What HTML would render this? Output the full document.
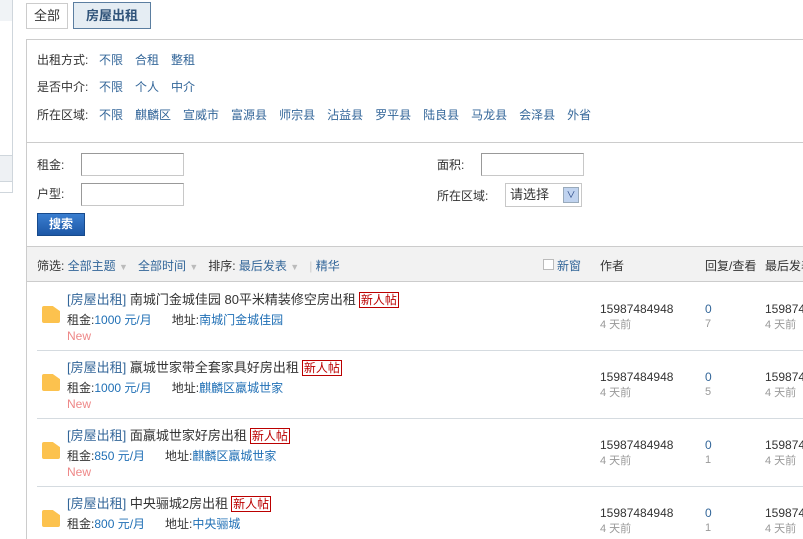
<!DOCTYPE html>
<html><head><meta charset="utf-8"><style>
*{margin:0;padding:0;box-sizing:border-box}
body{width:803px;height:530px;overflow:hidden;background:#fff;font-family:"Liberation Sans","Noto Sans CJK SC",sans-serif;font-size:12px;color:#333;position:relative}
.a{position:absolute;white-space:nowrap}
a,.l{color:#336699;text-decoration:none}
.b{color:#1f6fb5}
.inp{position:absolute;width:103px;height:23px;border:1px solid #c8c8c8;border-top-color:#999;border-left-color:#999;background:#fff}
.line{position:absolute;height:1px;background:#d5dbe0}
.fold{position:absolute;width:18px;height:17px;background:#fcc24e;border-radius:2px;clip-path:polygon(0 0,60% 0,100% 30%,100% 100%,0 100%)}
.tag{border:1px solid #b00;color:#b00;font-size:12px;padding:0 1px;line-height:14px;display:inline-block;margin-left:3px}
.g{color:#999;font-size:11px}
.opt{position:absolute;left:99px;display:flex;gap:12px;white-space:nowrap}
</style></head><body>
<div class="a" style="left:0;top:0;width:13px;height:193px;border-right:1px solid #cfd6dc"></div>
<div class="a" style="left:0;top:0;width:12px;height:21px;background:#f0f3f6"></div>
<div class="a" style="left:0;top:155px;width:13px;height:1px;background:#cfd6dc"></div>
<div class="a" style="left:0;top:156px;width:12px;height:25px;background:#eef1f4"></div>
<div class="a" style="left:0;top:181px;width:13px;height:1px;background:#cfd6dc"></div>
<div class="a" style="left:0;top:192px;width:13px;height:1px;background:#cfd6dc"></div>

<div class="a" style="left:26px;top:3px;width:42px;height:26px;border:1px solid #ccc;text-align:center;line-height:24px;font-size:13px">全部</div>
<div class="a" style="left:73px;top:2px;width:78px;height:27px;border:1px solid #5b7ea0;background:#e5edf3;text-align:center;line-height:25px;font-size:13px;font-weight:bold;color:#2f5379">房屋出租</div>

<div class="a" style="left:26px;top:39px;width:800px;height:500px;border-left:1px solid #ccc;border-top:1px solid #ccc"></div>

<div class="a" style="left:37px;top:51px">出租方式:</div>
<div class="opt" style="top:51px"><a>不限</a><a>合租</a><a>整租</a></div>
<div class="a" style="left:37px;top:78px">是否中介:</div>
<div class="opt" style="top:78px"><a>不限</a><a>个人</a><a>中介</a></div>
<div class="a" style="left:37px;top:106px">所在区域:</div>
<div class="opt" style="top:106px"><a>不限</a><a>麒麟区</a><a>宣威市</a><a>富源县</a><a>师宗县</a><a>沾益县</a><a>罗平县</a><a>陆良县</a><a>马龙县</a><a>会泽县</a><a>外省</a></div>
<div class="a" style="left:27px;top:142px;width:780px;height:1px;background:#ccc"></div>

<div class="a" style="left:37px;top:156px">租金:</div>
<div class="inp" style="left:81px;top:153px"></div>
<div class="a" style="left:37px;top:185px">户型:</div>
<div class="inp" style="left:81px;top:183px"></div>
<div class="a" style="left:437px;top:156px">面积:</div>
<div class="inp" style="left:481px;top:153px"></div>
<div class="a" style="left:437px;top:187px">所在区域:</div>
<div class="a" style="left:505px;top:183px;width:77px;height:24px;border:1px solid #c8c8c8;background:#fff;padding:3px 0 0 4px;font-size:13px;line-height:16px">请选择</div>
<div class="a" style="left:563px;top:187px;width:16px;height:16px;background:#c0d3ef;border:1px solid #9ab;color:#1f3f7f;font-size:9px;text-align:center;line-height:14px">&#8744;</div>
<div class="a" style="left:37px;top:213px;width:48px;height:23px;background:linear-gradient(#3a7ed0,#1d57a6);border:1px solid #174a8c;color:#fff;font-weight:bold;text-align:center;line-height:21px;font-size:12px">搜索</div>

<div class="a" style="left:27px;top:246px;width:780px;height:1px;background:#ccc"></div>
<div class="a" style="left:27px;top:247px;width:780px;height:35px;background:#f2f2f2;border-bottom:1px solid #ccc"></div>
<div class="a" style="left:37px;top:257px">筛选: <a>全部主题</a> <span style="color:#bbb;font-size:9px">▼</span>&nbsp;&nbsp; <a>全部时间</a> <span style="color:#bbb;font-size:9px">▼</span>&nbsp;&nbsp; 排序: <a>最后发表</a> <span style="color:#bbb;font-size:9px">▼</span>&nbsp;&nbsp; <span style="color:#ccc">|</span> <a>精华</a></div>
<div class="a" style="left:543px;top:259px;width:11px;height:11px;border:1px solid #bbb;background:#fff"></div>
<div class="a" style="left:557px;top:257px"><a>新窗</a></div>
<div class="a" style="left:600px;top:257px">作者</div>
<div class="a" style="left:705px;top:257px">回复/查看</div>
<div class="a" style="left:765px;top:257px">最后发表</div>

<div class="fold" style="left:42px;top:306px"></div>
<div class="a" style="left:67px;top:289px;font-size:13px"><span class="l">[房屋出租]</span> 南城门金城佳园 80平米精装修空房出租<span class="tag">新人帖</span></div>
<div class="a" style="left:67px;top:311px">租金:<span class="b">1000 元/月</span>&nbsp;&nbsp;&nbsp;&nbsp;&nbsp;&nbsp;地址:<span class="b">南城门金城佳园</span></div>
<div class="a" style="left:67px;top:329px;color:#e88">New</div>
<div class="a" style="left:600px;top:302px">15987484948<br><span class="g">4 天前</span></div>
<div class="a" style="left:705px;top:302px"><a>0</a><br><span class="g">7</span></div>
<div class="a" style="left:765px;top:302px">15987484948<br><span class="g">4 天前</span></div>
<div class="line" style="left:37px;top:350px;width:770px"></div>

<div class="fold" style="left:42px;top:374px"></div>
<div class="a" style="left:67px;top:357px;font-size:13px"><span class="l">[房屋出租]</span> 羸城世家带全套家具好房出租<span class="tag">新人帖</span></div>
<div class="a" style="left:67px;top:379px">租金:<span class="b">1000 元/月</span>&nbsp;&nbsp;&nbsp;&nbsp;&nbsp;&nbsp;地址:<span class="b">麒麟区羸城世家</span></div>
<div class="a" style="left:67px;top:397px;color:#e88">New</div>
<div class="a" style="left:600px;top:370px">15987484948<br><span class="g">4 天前</span></div>
<div class="a" style="left:705px;top:370px"><a>0</a><br><span class="g">5</span></div>
<div class="a" style="left:765px;top:370px">15987484948<br><span class="g">4 天前</span></div>
<div class="line" style="left:37px;top:418px;width:770px"></div>

<div class="fold" style="left:42px;top:442px"></div>
<div class="a" style="left:67px;top:425px;font-size:13px"><span class="l">[房屋出租]</span> 面羸城世家好房出租<span class="tag">新人帖</span></div>
<div class="a" style="left:67px;top:447px">租金:<span class="b">850 元/月</span>&nbsp;&nbsp;&nbsp;&nbsp;&nbsp;&nbsp;地址:<span class="b">麒麟区羸城世家</span></div>
<div class="a" style="left:67px;top:465px;color:#e88">New</div>
<div class="a" style="left:600px;top:438px">15987484948<br><span class="g">4 天前</span></div>
<div class="a" style="left:705px;top:438px"><a>0</a><br><span class="g">1</span></div>
<div class="a" style="left:765px;top:438px">15987484948<br><span class="g">4 天前</span></div>
<div class="line" style="left:37px;top:486px;width:770px"></div>

<div class="fold" style="left:42px;top:510px"></div>
<div class="a" style="left:67px;top:493px;font-size:13px"><span class="l">[房屋出租]</span> 中央骊城2房出租<span class="tag">新人帖</span></div>
<div class="a" style="left:67px;top:515px">租金:<span class="b">800 元/月</span>&nbsp;&nbsp;&nbsp;&nbsp;&nbsp;&nbsp;地址:<span class="b">中央骊城</span></div>
<div class="a" style="left:600px;top:506px">15987484948<br><span class="g">4 天前</span></div>
<div class="a" style="left:705px;top:506px"><a>0</a><br><span class="g">1</span></div>
<div class="a" style="left:765px;top:506px">15987484948<br><span class="g">4 天前</span></div>
</body></html>
